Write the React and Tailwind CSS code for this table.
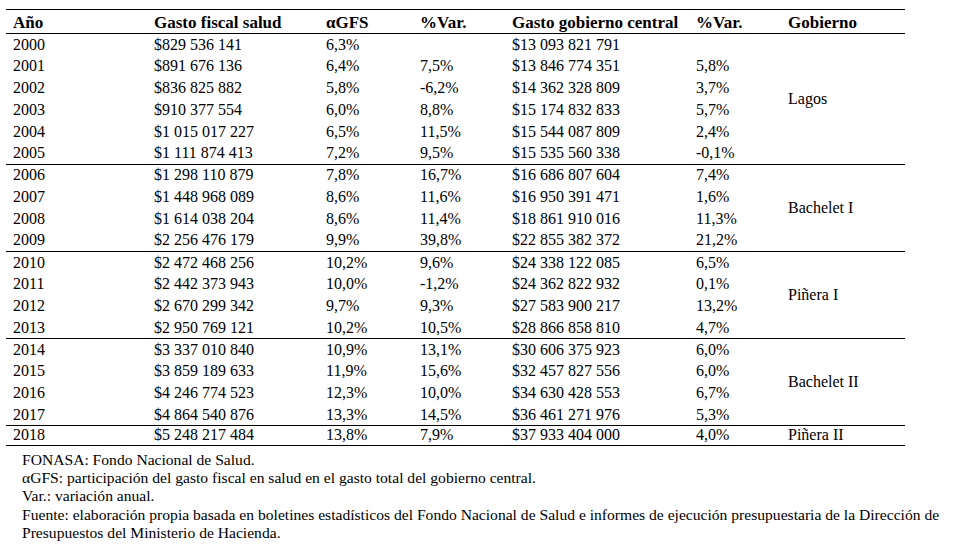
import React from "react";

const groups = [
  {
    gov: "Lagos",
    rows: [
      ["2000", "$829 536 141", "6,3%", "", "$13 093 821 791", ""],
      ["2001", "$891 676 136", "6,4%", "7,5%", "$13 846 774 351", "5,8%"],
      ["2002", "$836 825 882", "5,8%", "-6,2%", "$14 362 328 809", "3,7%"],
      ["2003", "$910 377 554", "6,0%", "8,8%", "$15 174 832 833", "5,7%"],
      ["2004", "$1 015 017 227", "6,5%", "11,5%", "$15 544 087 809", "2,4%"],
      ["2005", "$1 111 874 413", "7,2%", "9,5%", "$15 535 560 338", "-0,1%"],
    ],
  },
  {
    gov: "Bachelet I",
    rows: [
      ["2006", "$1 298 110 879", "7,8%", "16,7%", "$16 686 807 604", "7,4%"],
      ["2007", "$1 448 968 089", "8,6%", "11,6%", "$16 950 391 471", "1,6%"],
      ["2008", "$1 614 038 204", "8,6%", "11,4%", "$18 861 910 016", "11,3%"],
      ["2009", "$2 256 476 179", "9,9%", "39,8%", "$22 855 382 372", "21,2%"],
    ],
  },
  {
    gov: "Piñera I",
    rows: [
      ["2010", "$2 472 468 256", "10,2%", "9,6%", "$24 338 122 085", "6,5%"],
      ["2011", "$2 442 373 943", "10,0%", "-1,2%", "$24 362 822 932", "0,1%"],
      ["2012", "$2 670 299 342", "9,7%", "9,3%", "$27 583 900 217", "13,2%"],
      ["2013", "$2 950 769 121", "10,2%", "10,5%", "$28 866 858 810", "4,7%"],
    ],
  },
  {
    gov: "Bachelet II",
    rows: [
      ["2014", "$3 337 010 840", "10,9%", "13,1%", "$30 606 375 923", "6,0%"],
      ["2015", "$3 859 189 633", "11,9%", "15,6%", "$32 457 827 556", "6,0%"],
      ["2016", "$4 246 774 523", "12,3%", "10,0%", "$34 630 428 553", "6,7%"],
      ["2017", "$4 864 540 876", "13,3%", "14,5%", "$36 461 271 976", "5,3%"],
    ],
  },
];

const headers = ["Año", "Gasto fiscal salud", "αGFS", "%Var.", "Gasto gobierno central", "%Var.", "Gobierno"];

export default function App() {
  return (
    <div className="w-[963px] h-[553px] bg-white text-black overflow-hidden font-['Liberation_Serif','Times_New_Roman',serif]">
      <div className="pt-[9px] pl-[6px]">
        <table className="table-fixed border-collapse w-[899px] text-[16px] leading-none font-['Liberation_Serif','Times_New_Roman',serif]">
          <colgroup>
            <col className="w-[141px]" />
            <col className="w-[172px]" />
            <col className="w-[94px]" />
            <col className="w-[92px]" />
            <col className="w-[184px]" />
            <col className="w-[92px]" />
            <col className="w-[124px]" />
          </colgroup>
          <thead>
            <tr className="h-[24px] border-t border-b border-black">
              {headers.map((h, i) => (
                <th key={i} className="text-left font-bold text-[17px] pl-[7px] p-0 pt-[1px] whitespace-nowrap align-middle">
                  {h}
                </th>
              ))}
            </tr>
          </thead>
          {groups.map((g, gi) => (
            <tbody key={gi} className="border-b border-black">
              {g.rows.map((r, ri) => (
                <tr key={ri} className="h-[21.8px]">
                  {r.map((c, ci) => (
                    <td key={ci} className="pl-[7px] p-0 whitespace-nowrap align-middle">
                      {c}
                    </td>
                  ))}
                  {ri === 0 && (
                    <td rowSpan={g.rows.length} className="pl-[7px] p-0 whitespace-nowrap align-middle">
                      {g.gov}
                    </td>
                  )}
                </tr>
              ))}
            </tbody>
          ))}
          <tbody className="border-b border-black">
            <tr className="h-[19.5px]">
              {["2018", "$5 248 217 484", "13,8%", "7,9%", "$37 933 404 000", "4,0%", "Piñera II"].map((c, ci) => (
                <td key={ci} className="pl-[7px] p-0 pb-[2px] whitespace-nowrap align-middle">
                  {c}
                </td>
              ))}
            </tr>
          </tbody>
        </table>
        <div className="pl-[16px] pt-[5px] text-[15.6px] leading-[18.3px] font-['Liberation_Serif','Times_New_Roman',serif]">
          <p>FONASA: Fondo Nacional de Salud.</p>
          <p>αGFS: participación del gasto fiscal en salud en el gasto total del gobierno central.</p>
          <p>Var.: variación anual.</p>
          <p className="whitespace-nowrap">
            Fuente: elaboración propia basada en boletines estadísticos del Fondo Nacional de Salud e informes de ejecución presupuestaria de la Dirección de
          </p>
          <p>Presupuestos del Ministerio de Hacienda.</p>
        </div>
      </div>
    </div>
  );
}
